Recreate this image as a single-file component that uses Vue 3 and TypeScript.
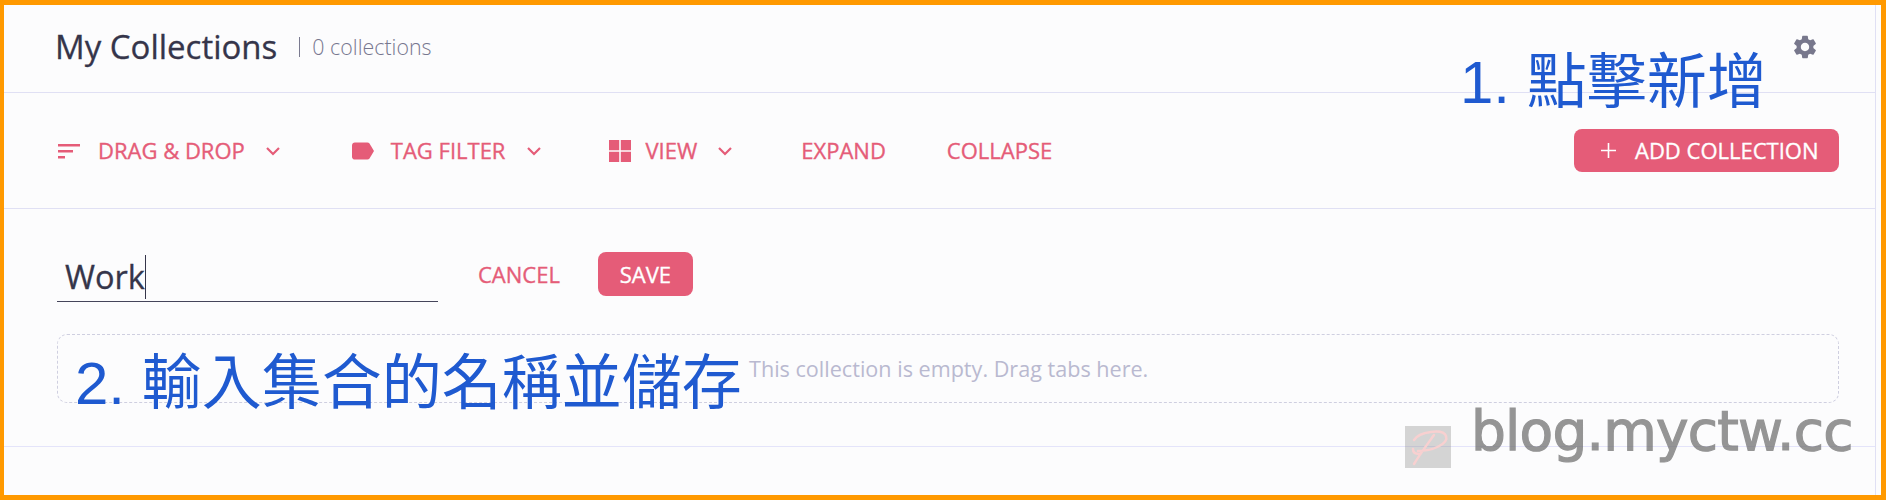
<script setup lang="ts">
import { ref } from "vue";

const name = ref("Work");
</script>

<template>
  <div class="frame">
    <div class="page">
      <header class="top">
        <h1 class="title">My Collections</h1>
        <span class="count">0 collections</span>
        <svg class="gear" viewBox="0 0 24 24">
          <path
            d="M19.14 12.94c.04-.3.06-.61.06-.94s-.02-.64-.07-.94l2.03-1.58c.18-.14.23-.41.12-.61l-1.92-3.32c-.12-.22-.37-.29-.59-.22l-2.39.96c-.5-.38-1.03-.7-1.62-.94l-.36-2.54c-.04-.24-.24-.41-.48-.41h-3.84c-.24 0-.43.17-.47.41l-.36 2.54c-.59.24-1.13.57-1.62.94l-2.39-.96c-.22-.08-.47 0-.59.22L2.74 8.87c-.12.21-.08.47.12.61l2.03 1.58c-.05.3-.09.63-.09.94s.02.64.07.94l-2.03 1.58c-.18.14-.23.41-.12.61l1.92 3.32c.12.22.37.29.59.22l2.39-.96c.5.38 1.03.7 1.62.94l.36 2.54c.05.24.24.41.48.41h3.84c.24 0 .44-.17.47-.41l.36-2.54c.59-.24 1.13-.56 1.62-.94l2.39.96c.22.08.47 0 .59-.22l1.92-3.32c.12-.22.07-.47-.12-.61l-2.01-1.58zM12 15.6c-1.98 0-3.6-1.62-3.6-3.6s1.62-3.6 3.6-3.6 3.6 1.62 3.6 3.6-1.62 3.6-3.6 3.6z"
          />
        </svg>
      </header>

      <nav class="toolbar">
        <button class="tool tool-drag">
          <svg class="ico" viewBox="0 0 22 16">
            <path d="M0 1h22v2.4H0zM0 7h15v2.4H0zM0 13h7v2.4H0z" />
          </svg>
          <span class="label">DRAG &amp; DROP</span>
          <svg class="chev" viewBox="0 0 16 10"><path d="M2 2l6 6 6-6" /></svg>
        </button>
        <button class="tool tool-tag">
          <svg class="ico" viewBox="0 0 23 18">
            <path d="M3 0h13c1 0 1.700.4 2.300 1.100L23 9l-4.700 7.900c-.6.7-1.300 1.100-2.300 1.100H3c-1.700 0-3-1.300-3-3V3c0-1.700 1.300-3 3-3z" />
          </svg>
          <span class="label">TAG FILTER</span>
          <svg class="chev" viewBox="0 0 16 10"><path d="M2 2l6 6 6-6" /></svg>
        </button>
        <button class="tool tool-view">
          <svg class="ico" viewBox="0 0 22 22">
            <path d="M0 0h10.200v10.200H0zM11.800 0H22v10.200H11.800zM0 11.800h10.200V22H0zM11.800 11.800H22V22H11.800z" />
          </svg>
          <span class="label">VIEW</span>
          <svg class="chev" viewBox="0 0 16 10"><path d="M2 2l6 6 6-6" /></svg>
        </button>
        <button class="tool tool-expand"><span class="label">EXPAND</span></button>
        <button class="tool tool-collapse"><span class="label">COLLAPSE</span></button>
        <button class="add">
          <svg class="plus" viewBox="0 0 15 15"><path d="M7.500 0v15M0 7.500h15" /></svg>
          <span class="label">ADD COLLECTION</span>
        </button>
      </nav>

      <section class="body">
        <form class="form" @submit.prevent>
          <div class="field">
            <span class="value">{{ name }}</span>
            <span class="caret"></span>
          </div>
          <button class="tool cancel" type="button"><span class="label">CANCEL</span></button>
          <button class="save" type="button"><span class="label">SAVE</span></button>
        </form>
        <div class="dropzone">This collection is empty. Drag tabs here.</div>
      </section>
    </div>

    <!-- screenshot annotations, drawn over the app -->
    <div class="note note-one">1. 點擊新增</div>
    <div class="note note-two">2. 輸入集合的名稱並儲存</div>
    <div class="mark">
      <svg class="mark-logo" viewBox="0 0 46 42">
        <path d="M9 14C14 6 38 2 41 10c3 8-14 15-28 15M29 9C24 16 15 28 9 38M8 23c0 3 2 5 6 5" />
      </svg>
      <span class="mark-text">blog.myctw.cc</span>
    </div>
  </div>
</template>

<style>
html,
body {
  margin: 0;
  background: #fcfcfd;
}
</style>

<style scoped>
.frame {
  position: relative;
  box-sizing: border-box;
  width: 1886px;
  height: 500px;
  border: solid #ff9900;
  border-width: 5px 5px 5px 4px;
  background: #fcfcfd;
  font-family: "Open Sans", "Noto Sans", sans-serif;
  overflow: hidden;
}

.page {
  box-sizing: border-box;
  width: 1872px;
  height: 490px;
  border-right: 1px solid #e0e0f4;
}

.top {
  display: flex;
  align-items: center;
  box-sizing: border-box;
  height: 88px;
  padding: 0 56px 0 51px;
  border-bottom: 1px solid #e0e0f4;
}

.title {
  margin: 0;
  font-size: 33px;
  line-height: 40px;
  margin-top: -3px;
  font-weight: 400;
  color: #35354a;
  -webkit-text-stroke: 0.3px #35354a;
}

.count {
  margin-left: 22px;
  padding-left: 12px;
  margin-top: -3px;
  border-left: 1px solid #7a7a90;
  font-size: 21.400px;
  line-height: 20px;
  color: #77778f;
  font-weight: 300;
}

.gear {
  margin-left: auto;
  width: 28px;
  height: 28px;
  margin-top: -4px;
  fill: #77778c;
}

.toolbar {
  display: flex;
  align-items: center;
  box-sizing: border-box;
  height: 116px;
  padding: 0 36px 0 54px;
  border-bottom: 1px solid #e0e0f4;
}

.label {
  margin-top: -2px;
}

.tool {
  display: flex;
  align-items: center;
  padding: 0;
  border: 0;
  background: none;
  font-family: inherit;
  font-size: 22px;
  color: #e55c78;
  -webkit-text-stroke: 0.35px #e55c78;
  cursor: pointer;
}

.ico {
  width: 22px;
  height: 22px;
  margin-right: 18px;
  fill: #e55c78;
  stroke: none;
}

.chev {
  width: 16px;
  height: 10px;
  margin-left: 20px;
  fill: none;
  stroke: #e55c78;
  stroke-width: 2.2;
}

.tool-tag {
  margin-left: 71px;
}

.tool-tag .ico {
  margin-right: 17px;
}

.tool-tag .chev {
  margin-left: 21px;
}

.tool-view {
  margin-left: 67px;
}

.tool-view .ico {
  margin-right: 14px;
}

.tool-expand {
  margin-left: 68px;
}

.tool-collapse {
  margin-left: 61px;
}

.add {
  display: flex;
  align-items: center;
  box-sizing: border-box;
  width: 265px;
  height: 43px;
  margin-left: auto;
  padding: 0 0 0 27px;
  border: 0;
  border-radius: 8px;
  background: #e55c78;
  color: #fff;
  font-family: inherit;
  font-size: 22px;
  -webkit-text-stroke: 0.35px #fff;
  cursor: pointer;
}

.plus {
  width: 15px;
  height: 15px;
  margin-right: 19px;
  fill: none;
  stroke: #fff;
  stroke-width: 1.6;
}

.body {
  box-sizing: border-box;
  height: 238px;
  padding: 43px 36px 0 53px;
  border-bottom: 1px solid #e4e4fa;
}

.form {
  display: flex;
  align-items: center;
  height: 45px;
}

.field {
  display: flex;
  align-items: center;
  box-sizing: border-box;
  width: 381px;
  height: 50px;
  padding-left: 8px;
  border-bottom: 1px solid #45455a;
  margin-top: 5px;
}

.value {
  font-size: 32.500px;
  color: #35354a;
  -webkit-text-stroke: 0.3px #35354a;
}

.caret {
  width: 1.500px;
  height: 44px;
  background: #35354a;
}

.cancel {
  margin-left: 40px;
}

.save {
  width: 95px;
  height: 44px;
  margin-left: 38px;
  margin-top: -2px;
  padding: 0;
  border: 0;
  border-radius: 8px;
  background: #e55c78;
  color: #fff;
  font-family: inherit;
  font-size: 22px;
  -webkit-text-stroke: 0.35px #fff;
  cursor: pointer;
}

.dropzone {
  display: flex;
  align-items: center;
  box-sizing: border-box;
  height: 69px;
  margin-top: 37px;
  padding-left: 691px;
  border: 1px dashed #cfcfe0;
  border-radius: 10px;
  font-size: 21.600px;
  color: #b9b9d0;
}

.note {
  position: absolute;
  color: #1f5ad0;
  font-family: "Liberation Sans", "Noto Sans CJK TC", sans-serif;
  white-space: nowrap;
  line-height: 1;
}

.note-one {
  left: 1456px;
  top: 48px;
  font-size: 60px;
}

.note-two {
  left: 71px;
  top: 349px;
  font-size: 60px;
}

.mark {
  position: absolute;
  left: 1401px;
  top: 395px;
  display: flex;
  align-items: flex-start;
}

.mark-logo {
  width: 46px;
  height: 42px;
  margin-top: 26px;
  background: rgba(130, 130, 130, 0.33);
  fill: none;
  stroke: #f8d0d0;
  stroke-width: 2.500;
  stroke-linecap: round;
}

.mark-text {
  margin-left: 20px;
  margin-top: -3px;
  font-family: "DejaVu Sans", sans-serif;
  font-size: 55px;
  line-height: 68px;
  letter-spacing: -0.800px;
  color: #6e6e6e;
  opacity: 0.72;
  -webkit-text-stroke: 1.200px #6e6e6e;
}
</style>
